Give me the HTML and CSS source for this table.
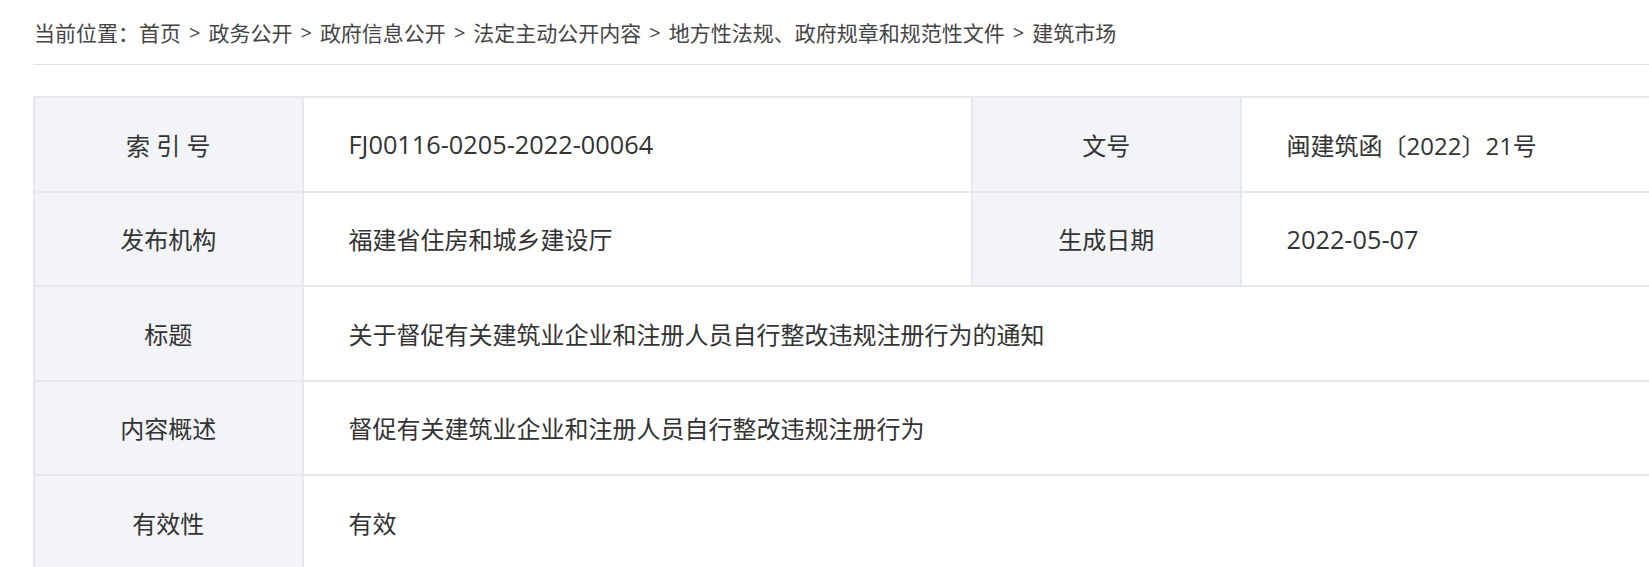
FILE: index.html
```html
<!DOCTYPE html>
<html lang="zh-CN">
<head>
<meta charset="utf-8">
<title>建筑市场</title>
<link rel="stylesheet" href="styles.css">
</head>
<body>
<div class="page">
  <div class="crumbs">
    <span>当前位置：</span><a>首页</a><span class="sep">&gt;</span><a>政务公开</a><span class="sep">&gt;</span><a>政府信息公开</a><span class="sep">&gt;</span><a>法定主动公开内容</a><span class="sep">&gt;</span><a>地方性法规、政府规章和规范性文件</a><span class="sep">&gt;</span><a>建筑市场</a>
  </div>
  <table class="info">
    <colgroup>
      <col class="c-label"><col class="c-value"><col class="c-label"><col class="c-value2">
    </colgroup>
    <tr>
      <th>索 引 号</th>
      <td><span class="num">FJ00116-0205-2022-00064</span></td>
      <th>文号</th>
      <td>闽建筑函〔2022〕21号</td>
    </tr>
    <tr>
      <th>发布机构</th>
      <td>福建省住房和城乡建设厅</td>
      <th>生成日期</th>
      <td><span class="num">2022-05-07</span></td>
    </tr>
    <tr>
      <th>标题</th>
      <td colspan="3">关于督促有关建筑业企业和注册人员自行整改违规注册行为的通知</td>
    </tr>
    <tr>
      <th>内容概述</th>
      <td colspan="3">督促有关建筑业企业和注册人员自行整改违规注册行为</td>
    </tr>
    <tr>
      <th>有效性</th>
      <td colspan="3">有效</td>
    </tr>
  </table>
</div>
</body>
</html>
```
FILE: styles.css
```css
html, body {
  margin: 0;
  padding: 0;
  overflow: hidden;
  background: #fff;
}
body {
  font-family: "Open Sans", "Noto Sans CJK SC", sans-serif;
  color: #333;
}
.page {
  margin-left: 33px;
}
.crumbs {
  height: 64px;
  display: flex;
  align-items: center;
  padding-left: 1px;
  font-size: 21px;
  color: #444;
  border-bottom: 1px solid #dedede;
  white-space: nowrap;
  box-sizing: content-box;
}
.crumbs .sep {
  margin: 0 8px;
  font-size: 20px;
}
.info {
  margin-top: 31px;
  border-collapse: collapse;
  width: 1910px;
  table-layout: fixed;
  font-size: 24px;
  color: #333;
}
.c-label { width: 268px; }
.c-value { width: 668px; }
.c-value2 { width: 700px; }
.info th, .info td {
  border: 2px solid #e8e8ea;
  height: 92.5px;
  padding: 0;
  font-weight: normal;
}
.info th {
  background: #f2f4f8;
  text-align: center;
}
.info td {
  text-align: left;
  padding-left: 45px;
}
.info .num {
  font-size: 25.3px;
}
```
